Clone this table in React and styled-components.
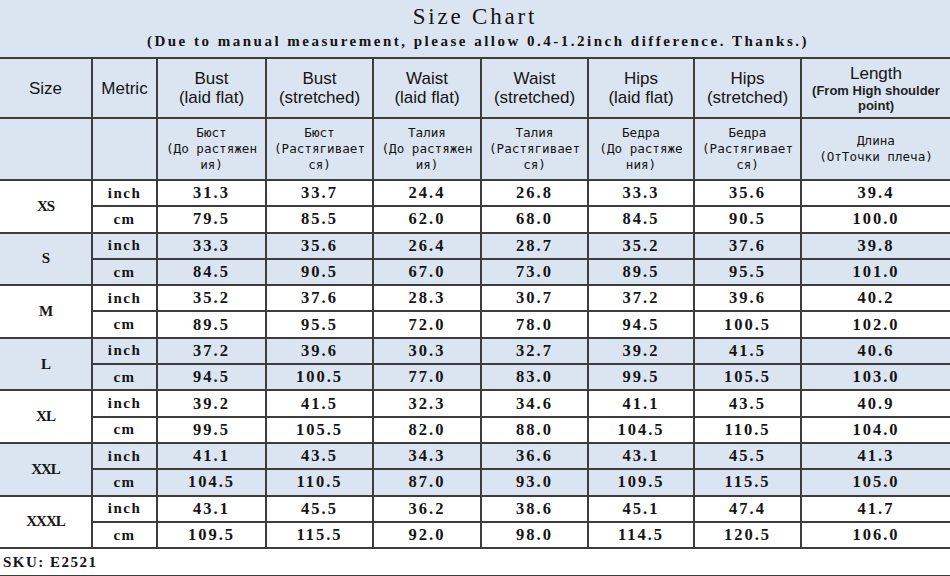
import React from "react";
import styled, { createGlobalStyle } from "styled-components";

const GlobalStyle = createGlobalStyle`
  html, body {
    margin: 0;
    padding: 0;
    background: #ffffff;
  }
`;

const SHADE = "#dbe5f1";
const LINE = "2px solid #3d3d3d";

const Page = styled.div`
  width: 950px;
  height: 576px;
  overflow: hidden;
  background: #ffffff;
  color: #141414;
`;

const TitleBlock = styled.div`
  height: 57px;
  background: ${SHADE};
  display: flex;
  flex-direction: column;
  align-items: center;
  box-sizing: border-box;
  padding-top: 3px;
`;

const Title = styled.div`
  font-family: "Liberation Serif", serif;
  font-size: 23px;
  line-height: 28px;
  letter-spacing: 2.8px;
`;

const Subtitle = styled.div`
  font-family: "Liberation Serif", serif;
  font-weight: bold;
  font-size: 15px;
  line-height: 20px;
  letter-spacing: 2.5px;
  padding-left: 6px;
  white-space: nowrap;
`;

const Table = styled.table`
  width: 950px;
  border-collapse: collapse;
  table-layout: fixed;
  border-top: ${LINE};
`;

const HeadCell = styled.th`
  font-family: "Liberation Sans", Arial, sans-serif;
  font-weight: normal;
  font-size: 17px;
  line-height: 19px;
  text-align: center;
  background: ${SHADE};
  border-right: ${(p) => (p.$last ? "none" : LINE)};
  border-bottom: ${LINE};
  padding: 0;
  height: 58px;
`;

const Small = styled.span`
  display: block;
  font-size: 13px;
  line-height: 15px;
  font-weight: bold;
  color: #222;
`;

const RuCell = styled.th`
  font-family: "DejaVu Sans Mono", monospace;
  font-weight: normal;
  font-size: 12.6px;
  line-height: 16px;
  text-align: center;
  background: ${SHADE};
  border-right: ${(p) => (p.$last ? "none" : LINE)};
  border-bottom: ${LINE};
  padding: 0;
  height: 60px;
  white-space: nowrap;
`;

const SizeCell = styled.td`
  font-family: "Liberation Serif", serif;
  font-weight: bold;
  font-size: 15px;
  text-align: center;
  letter-spacing: -1px;
  background: ${(p) => (p.$shaded ? SHADE : "#ffffff")};
  border-right: ${LINE};
  border-bottom: ${LINE};
  padding: 0;
`;

const MetricCell = styled.td`
  font-family: "Liberation Serif", serif;
  font-weight: bold;
  font-size: 15px;
  letter-spacing: 1.5px;
  text-align: center;
  background: ${(p) => (p.$shaded ? SHADE : "#ffffff")};
  border-right: ${LINE};
  border-bottom: ${LINE};
  padding: 0;
  height: 24.3px;
`;

const ValueCell = styled.td`
  font-family: "Liberation Serif", serif;
  font-weight: bold;
  font-size: 16.5px;
  letter-spacing: 2px;
  text-align: center;
  background: ${(p) => (p.$shaded ? SHADE : "#ffffff")};
  border-right: ${(p) => (p.$last ? "none" : LINE)};
  border-bottom: ${LINE};
  padding: 0;
`;

const Footer = styled.div`
  height: 26px;
  border-bottom: ${LINE};
  display: flex;
  align-items: center;
  padding-left: 3px;
  font-family: "Liberation Serif", serif;
  font-weight: bold;
  font-size: 15px;
  letter-spacing: 1.5px;
`;

const widths = [92, 65, 109, 107, 108, 107, 106, 107, 149];

const headers = [
  ["Bust", "(laid flat)"],
  ["Bust", "(stretched)"],
  ["Waist", "(laid flat)"],
  ["Waist", "(stretched)"],
  ["Hips", "(laid flat)"],
  ["Hips", "(stretched)"],
];

const ruHeaders = [
  ["Бюст", "(До растяжен", "ия)"],
  ["Бюст", "(Растягивает", "ся)"],
  ["Талия", "(До растяжен", "ия)"],
  ["Талия", "(Растягивает", "ся)"],
  ["Бедра", "(До растяже", "ния)"],
  ["Бедра", "(Растягивает", "ся)"],
  ["Длина", "(ОтТочки плеча)"],
];

const sizes = [
  { name: "XS", inch: ["31.3", "33.7", "24.4", "26.8", "33.3", "35.6", "39.4"], cm: ["79.5", "85.5", "62.0", "68.0", "84.5", "90.5", "100.0"] },
  { name: "S", inch: ["33.3", "35.6", "26.4", "28.7", "35.2", "37.6", "39.8"], cm: ["84.5", "90.5", "67.0", "73.0", "89.5", "95.5", "101.0"] },
  { name: "M", inch: ["35.2", "37.6", "28.3", "30.7", "37.2", "39.6", "40.2"], cm: ["89.5", "95.5", "72.0", "78.0", "94.5", "100.5", "102.0"] },
  { name: "L", inch: ["37.2", "39.6", "30.3", "32.7", "39.2", "41.5", "40.6"], cm: ["94.5", "100.5", "77.0", "83.0", "99.5", "105.5", "103.0"] },
  { name: "XL", inch: ["39.2", "41.5", "32.3", "34.6", "41.1", "43.5", "40.9"], cm: ["99.5", "105.5", "82.0", "88.0", "104.5", "110.5", "104.0"] },
  { name: "XXL", inch: ["41.1", "43.5", "34.3", "36.6", "43.1", "45.5", "41.3"], cm: ["104.5", "110.5", "87.0", "93.0", "109.5", "115.5", "105.0"] },
  { name: "XXXL", inch: ["43.1", "45.5", "36.2", "38.6", "45.1", "47.4", "41.7"], cm: ["109.5", "115.5", "92.0", "98.0", "114.5", "120.5", "106.0"] },
];

const App = () => {
  return (
    <Page>
      <GlobalStyle />
      <TitleBlock>
        <Title>Size Chart</Title>
        <Subtitle>
          (Due to manual measurement, please allow 0.4-1.2inch difference. Thanks.)
        </Subtitle>
      </TitleBlock>
      <Table>
        <colgroup>
          {widths.map((w, i) => (
            <col key={`col_${i}`} style={{ width: w }} />
          ))}
        </colgroup>
        <thead>
          <tr>
            <HeadCell>Size</HeadCell>
            <HeadCell>Metric</HeadCell>
            {headers.map((h, i) => (
              <HeadCell key={`h_${i}`}>
                {h[0]}
                <br />
                {h[1]}
              </HeadCell>
            ))}
            <HeadCell $last>
              Length
              <Small>(From High shoulder</Small>
              <Small>point)</Small>
            </HeadCell>
          </tr>
          <tr>
            <RuCell />
            <RuCell />
            {ruHeaders.map((h, i) => (
              <RuCell key={`ru_${i}`} $last={i === ruHeaders.length - 1}>
                {h.map((line, j) => (
                  <React.Fragment key={`ru_${i}_${j}`}>
                    {j > 0 && <br />}
                    {line}
                  </React.Fragment>
                ))}
              </RuCell>
            ))}
          </tr>
        </thead>
        <tbody>
          {sizes.map((s, i) => {
            const shaded = i % 2 === 1;
            return (
              <React.Fragment key={s.name}>
                <tr>
                  <SizeCell rowSpan={2} $shaded={shaded}>
                    {s.name}
                  </SizeCell>
                  <MetricCell $shaded={shaded}>inch</MetricCell>
                  {s.inch.map((v, j) => (
                    <ValueCell key={`i_${j}`} $shaded={shaded} $last={j === 6}>
                      {v}
                    </ValueCell>
                  ))}
                </tr>
                <tr>
                  <MetricCell $shaded={shaded}>cm</MetricCell>
                  {s.cm.map((v, j) => (
                    <ValueCell key={`c_${j}`} $shaded={shaded} $last={j === 6}>
                      {v}
                    </ValueCell>
                  ))}
                </tr>
              </React.Fragment>
            );
          })}
        </tbody>
      </Table>
      <Footer>SKU: E2521</Footer>
    </Page>
  );
};

export default App;
